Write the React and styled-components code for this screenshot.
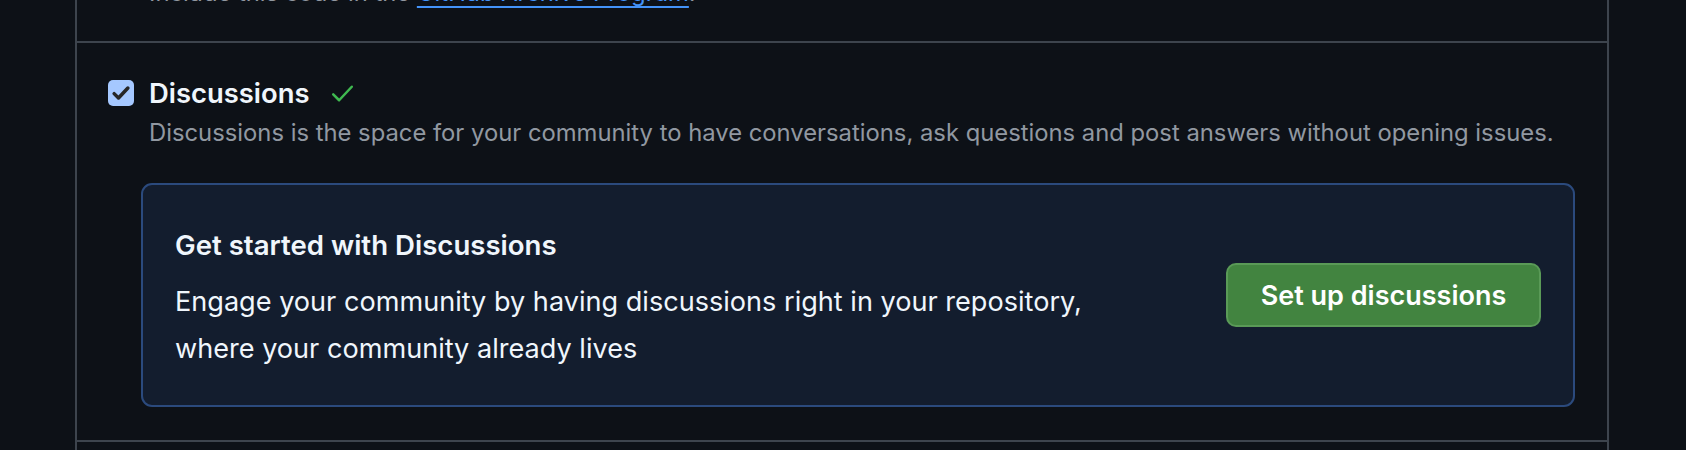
import React from "react";
import styled, { createGlobalStyle } from "styled-components";

const GlobalStyle = createGlobalStyle`
  html, body {
    margin: 0;
    padding: 0;
    background: #0d1117;
    color: #f0f6fc;
    font-family: Inter, "Noto Sans", "Liberation Sans", sans-serif;
  }
  * { box-sizing: border-box; }
`;

const Page = styled.div`
  height: 450px;
  overflow: hidden;
  padding-left: 75px;
`;

const Panel = styled.div`
  width: 1534px;
  border-left: 2px solid #3d444d;
  border-right: 2px solid #3d444d;
  min-height: 460px;
`;

const Section = styled.section`
  border-top: ${(props) => (props.first ? "none" : "2px solid #3d444d")};
  padding: ${(props) => props.pad || "0"};
  height: ${(props) => props.h || "auto"};
  overflow: hidden;
`;

const Note = styled.p`
  margin: -24px 0 0 72px;
  font-size: 23.8px;
  line-height: 34px;
  color: #9198a1;

  a {
    color: #4493f8;
    text-decoration: underline;
    text-decoration-thickness: 2px;
    text-underline-offset: 5px;
  }
`;

const TitleRow = styled.label`
  display: flex;
  align-items: center;
  gap: 15px;
  margin-left: 31px;
  height: 26px;
`;

const Box = styled.span`
  width: 26px;
  height: 26px;
  border-radius: 5px;
  background: #a5c8ff;
  display: flex;
  align-items: center;
  justify-content: center;
  flex-shrink: 0;
`;

const Title = styled.h3`
  margin: 0;
  font-size: 27.4px;
  font-weight: 600;
  line-height: 26px;
  color: #f0f6fc;
  display: flex;
  align-items: center;
  gap: 20px;
`;

const Hint = styled.p`
  margin: 10px 0 0 72px;
  font-size: 23.8px;
  line-height: 34px;
  color: #9198a1;
`;

const Card = styled.div`
  margin: 33px 32px 0 64px;
  border: 2px solid #2b4a7d;
  border-radius: 11px;
  background: #131d2e;
  padding: 41px 32px 33px 32px;
  display: flex;
  align-items: center;
  justify-content: space-between;
`;

const CardText = styled.div`
  display: flex;
  flex-direction: column;
`;

const CardTitle = styled.h4`
  margin: 0;
  font-size: 27.6px;
  font-weight: 600;
  line-height: 38px;
  color: #f0f6fc;
`;

const CardBody = styled.p`
  margin: 14px 0 0;
  font-size: 27.1px;
  line-height: 47px;
  color: #f0f6fc;
`;

const Button = styled.button`
  width: 315px;
  height: 64px;
  margin-bottom: 8px;
  border-radius: 10px;
  border: 2px solid #5a9a57;
  background: #428440;
  color: #ffffff;
  font-family: inherit;
  font-size: 27px;
  font-weight: 600;
  flex-shrink: 0;
  cursor: pointer;
`;

function CheckMark({ color, size, width }) {
  return (
    <svg width={size} height={size} viewBox="0 0 16 16" fill="none">
      <path
        d="M2.5 8.5l3.5 3.5 7.5-8"
        stroke={color}
        strokeWidth={width}
        strokeLinecap="round"
        strokeLinejoin="round"
      />
    </svg>
  );
}

export default function App() {
  return (
    <>
      <GlobalStyle />
      <Page>
        <Panel>
          <Section first h="41px">
            <Note>
              Include this code in the <a href="#archive">GitHub Archive Program</a>.
            </Note>
          </Section>
          <Section pad="37px 0 33px">
            <TitleRow>
              <Box>
                <CheckMark color="#262626" size={20} width={2.8} />
              </Box>
              <Title>
                Discussions
                <CheckMark color="#3fb950" size={27} width={1.5} />
              </Title>
            </TitleRow>
            <Hint>
              Discussions is the space for your community to have conversations, ask questions and post answers without opening issues.
            </Hint>
            <Card>
              <CardText>
                <CardTitle>Get started with Discussions</CardTitle>
                <CardBody>
                  Engage your community by having discussions right in your repository,
                  <br />
                  where your community already lives
                </CardBody>
              </CardText>
              <Button>Set up discussions</Button>
            </Card>
          </Section>
          <Section h="20px" />
        </Panel>
      </Page>
    </>
  );
}
